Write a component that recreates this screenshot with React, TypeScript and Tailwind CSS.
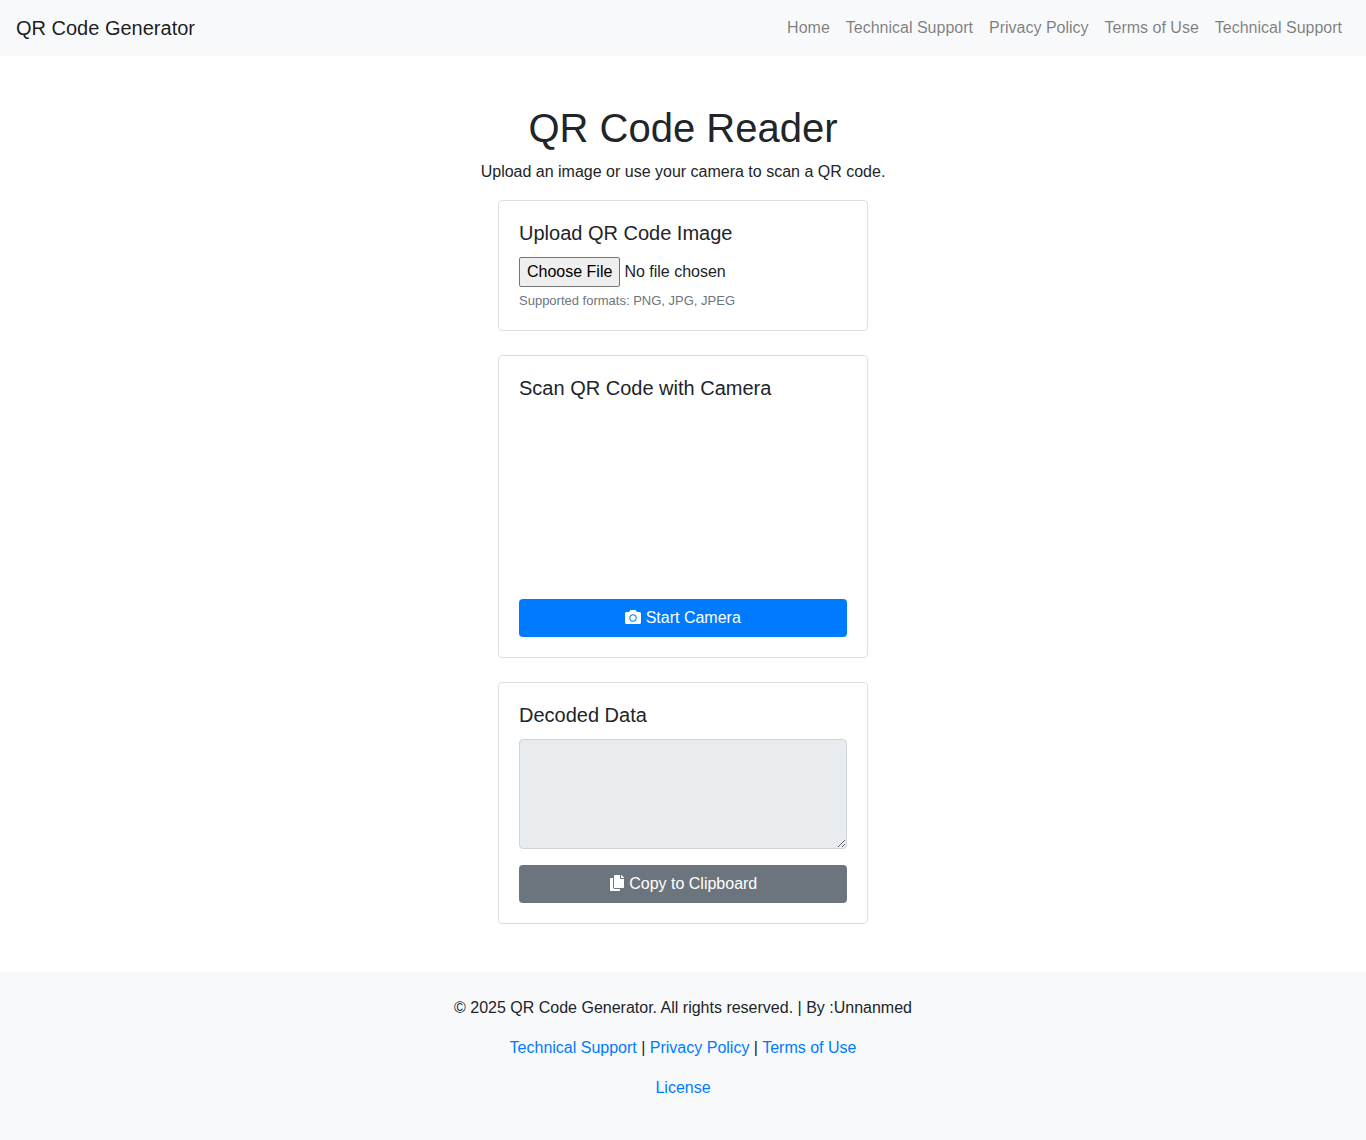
import React from "react";
import { FaCamera, FaCopy } from "react-icons/fa";

const navLinks = ["Home", "Technical Support", "Privacy Policy", "Terms of Use", "Technical Support"];

function Card({ title, children }: { title: string; children: React.ReactNode }) {
  return (
    <section className="rounded border border-[#dfdfdf] bg-white p-5">
      <h2 className="mb-3 text-xl leading-6">{title}</h2>
      {children}
    </section>
  );
}

export default function App() {
  return (
    <div className="min-h-screen bg-white font-['Liberation_Sans',Arial,sans-serif] text-base text-[#212529]">
      <nav className="flex flex-wrap items-center justify-between bg-[#f8f9fa] px-4 py-2">
        <a href="#" className="py-1 text-xl leading-8 text-black/90">QR Code Generator</a>
        <ul className="flex flex-wrap">
          {navLinks.map((label, i) => (
            <li key={i}>
              <a href="#" className="block p-2 text-black/50">{label}</a>
            </li>
          ))}
        </ul>
      </nav>

      <main className="px-4 py-12">
        <header className="mb-4 text-center">
          <h1 className="mb-2 text-[40px] leading-12">QR Code Reader</h1>
          <p>Upload an image or use your camera to scan a QR code.</p>
        </header>
        <div className="mx-auto flex max-w-[370px] flex-col gap-6">
          <Card title="Upload QR Code Image">
            <input
              type="file"
              accept="image/*"
              aria-label="Upload QR Code Image"
              className="block h-[30px] w-full file:mr-1 file:h-[30px] file:rounded-xs file:border file:border-solid file:border-[#767676] file:bg-[#efefef] file:px-[7px] file:text-black"
            />
            <small className="mt-1 block text-[13px] leading-[19px] text-[#6c757d]">Supported formats: PNG, JPG, JPEG</small>
          </Card>
          <Card title="Scan QR Code with Camera">
            <div className="h-[187px]" />
            <button type="button" className="block w-full rounded bg-[#007bff] py-[7px] text-center text-white">
              <FaCamera className="inline-block align-[-2px]" /> Start Camera
            </button>
          </Card>
          <Card title="Decoded Data">
            <textarea
              readOnly
              aria-label="Decoded Data"
              className="mb-4 block h-[110px] w-full resize-y rounded border border-[#ced4da] bg-[#e9ecef] px-3 py-2"
            />
            <button type="button" className="block w-full rounded bg-[#6c757d] py-[7px] text-center text-white">
              <FaCopy className="inline-block align-[-2px]" /> Copy to Clipboard
            </button>
          </Card>
        </div>
      </main>

      <footer className="bg-[#f8f9fa] py-6 text-center">
        <p className="mb-4">© 2025 QR Code Generator. All rights reserved. | By :Unnanmed</p>
        <p className="mb-4">
          <a href="#" className="text-[#007bff]">Technical Support</a> | <a href="#" className="text-[#007bff]">Privacy Policy</a> | <a href="#" className="text-[#007bff]">Terms of Use</a>
        </p>
        <p className="mb-4"><a href="#" className="text-[#007bff]">License</a></p>
      </footer>
    </div>
  );
}
